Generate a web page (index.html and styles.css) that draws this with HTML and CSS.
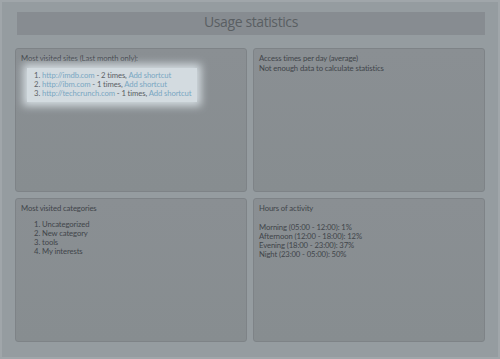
FILE: index.html
```html
<!DOCTYPE html>
<html>
	<head>
		<title>Usage statistics</title>
		<meta charset="UTF-8" />
		<link rel="stylesheet" href="styles.css">
	</head>
	<body>
		<div id="page">
			<h1 id="title">Usage statistics</h1>
			<div id="stats">
				<div class="panel">
					<p class="caption">Most visited sites (Last month only):</p>
					<ol class="sites">
						<li><a href="#">http://imdb.com</a> - 2 times, <a href="#">Add shortcut</a></li>
						<li><a href="#">http://ibm.com</a> - 1 times, <a href="#">Add shortcut</a></li>
						<li><a href="#">http://techcrunch.com</a> - 1 times, <a href="#">Add shortcut</a></li>
					</ol>
				</div>
				<div class="panel">
					<p class="caption">Access times per day (average)<br />Not enough data to calculate statistics</p>
				</div>
				<div class="panel">
					<p class="caption">Most visited categories</p>
					<ol class="categories">
						<li>Uncategorized</li>
						<li>New category</li>
						<li>tools</li>
						<li>My interests</li>
					</ol>
				</div>
				<div class="panel">
					<p class="caption">Hours of activity</p>
					<p class="hours">
						Morning (05:00 - 12:00): 1%<br />
						Afternoon (12:00 - 18:00): 12%<br />
						Evening (18:00 - 23:00): 37%<br />
						Night (23:00 - 05:00): 50%
					</p>
				</div>
			</div>
		</div>
	</body>
</html>
```

FILE: styles.css
```css
body {
	margin: 0;
	background: #a0a6aa;
	font: 7.7px Lato, sans-serif;
	letter-spacing: -0.1px;
	color: #41454a;
}

#page {
	margin: 2px;
	height: 355px;
	box-sizing: border-box;
	padding: 10px 13px 0 13px;
	background: #959ca0;
}

#title {
	margin: 0 0 13px 2px;
	height: 23px;
	line-height: 27px;
	background: #878c91;
	font: 14px "Open Sans", sans-serif;
	letter-spacing: -0.4px;
	text-align: center;
	color: #5a5f63;
}

#stats {
	display: grid;
	grid-template-columns: 232px 232px;
	grid-template-rows: 144px 144px;
	gap: 6px;
}

.panel {
	background: linear-gradient(#8a8f93, #878d90);
	border: 1px solid #7e8387;
	border-radius: 3px;
	padding: 5px 5px;
}

.caption, .hours {
	margin: 0;
	line-height: 9.5px;
}

.hours {
	margin-top: 9px;
	line-height: 9.3px;
}

ol {
	margin: 6px 0 0 0;
	padding-left: 21px;
	line-height: 9.3px;
}

.sites {
	display: inline-block;
	margin: 4px 0 0 6px;
	padding: 3px 6px 4px 15px;
	background: #d3dbe0;
	color: #5a6065;
	box-shadow: 0 0 8px 4px #d3dbe0;
}

a {
	color: #7aa7c2;
	text-decoration: none;
}
```
